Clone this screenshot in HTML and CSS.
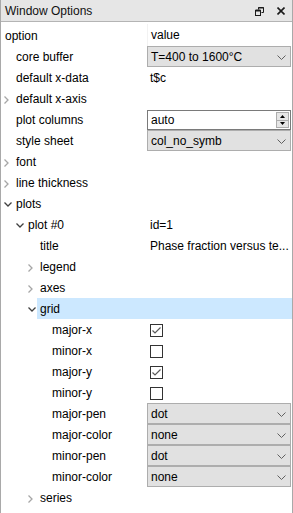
FILE: index.html
```html
<!DOCTYPE html>
<html>
<head>
<meta charset="utf-8">
<link rel="stylesheet" href="styles.css">
</head>
<body>
<div class="win">
  <div class="titlebar">
    <span class="ttl">Window Options</span>
    <div class="tbtns">
      <svg class="ico-float" width="9" height="9" viewBox="0 0 9 9"><path d="M3.5 0.5h5v5h-2" fill="none" stroke="#1a1a1a" stroke-width="1"/><path d="M3.5 0.5v2" fill="none" stroke="#1a1a1a" stroke-width="1"/><rect x="0.5" y="3.5" width="5" height="5" fill="none" stroke="#1a1a1a" stroke-width="1"/><path d="M0.5 3.5h5" stroke="#1a1a1a" stroke-width="2"/><path d="M3.5 0.5h5" stroke="#1a1a1a" stroke-width="2"/></svg>
      <svg class="ico-close" width="8" height="8" viewBox="0 0 8 8"><path d="M0.5 0.5L7.5 7.5M7.5 0.5L0.5 7.5" stroke="#1a1a1a" stroke-width="1.6"/></svg>
    </div>
  </div>
  <div class="tree">
    <div class="hdr"><div class="c1">option</div><div class="c2 hv">value</div></div>

    <div class="row"><div class="c1 l0"><span class="arr"></span>core buffer</div><div class="c2"><div class="combo"><span>T=400 to 1600°C</span><svg class="chev" width="9" height="5" viewBox="0 0 9 5"><path d="M0.5 0.5L4.5 4.5L8.5 0.5" fill="none" stroke="#606060"/></svg></div></div></div>
    <div class="row"><div class="c1 l0"><span class="arr"></span>default x-data</div><div class="c2 txt">t$c</div></div>
    <div class="row"><div class="c1 l0"><span class="arr"><svg width="5" height="8" viewBox="0 0 5 8"><path d="M0.5 0.5L4 4L0.5 7.5" fill="none" stroke="#a6a6a6" stroke-width="1.3"/></svg></span>default x-axis</div><div class="c2"></div></div>
    <div class="row"><div class="c1 l0"><span class="arr"></span>plot columns</div><div class="c2"><div class="spin"><span>auto</span><div class="spbtn"><div class="sb"><svg width="5" height="3" viewBox="0 0 5 3"><path d="M0 3L2.5 0L5 3Z" fill="#000"/></svg></div><div class="sb"><svg width="5" height="3" viewBox="0 0 5 3"><path d="M0 0L2.5 3L5 0Z" fill="#000"/></svg></div></div></div></div></div>
    <div class="row"><div class="c1 l0"><span class="arr"></span>style sheet</div><div class="c2"><div class="combo"><span>col_no_symb</span><svg class="chev" width="9" height="5" viewBox="0 0 9 5"><path d="M0.5 0.5L4.5 4.5L8.5 0.5" fill="none" stroke="#606060"/></svg></div></div></div>
    <div class="row"><div class="c1 l0"><span class="arr"><svg width="5" height="8" viewBox="0 0 5 8"><path d="M0.5 0.5L4 4L0.5 7.5" fill="none" stroke="#a6a6a6" stroke-width="1.3"/></svg></span>font</div><div class="c2"></div></div>
    <div class="row"><div class="c1 l0"><span class="arr"><svg width="5" height="8" viewBox="0 0 5 8"><path d="M0.5 0.5L4 4L0.5 7.5" fill="none" stroke="#a6a6a6" stroke-width="1.3"/></svg></span>line thickness</div><div class="c2"></div></div>
    <div class="row"><div class="c1 l0"><span class="arr"><svg width="8" height="5" viewBox="0 0 8 5"><path d="M0.5 0.5L4 4L7.5 0.5" fill="none" stroke="#404040" stroke-width="1.3"/></svg></span>plots</div><div class="c2"></div></div>
    <div class="row"><div class="c1 l1"><span class="arr"><svg width="8" height="5" viewBox="0 0 8 5"><path d="M0.5 0.5L4 4L7.5 0.5" fill="none" stroke="#404040" stroke-width="1.3"/></svg></span>plot #0</div><div class="c2 txt">id=1</div></div>
    <div class="row"><div class="c1 l2"><span class="arr"></span>title</div><div class="c2 txt">Phase fraction versus te...</div></div>
    <div class="row"><div class="c1 l2"><span class="arr"><svg width="5" height="8" viewBox="0 0 5 8"><path d="M0.5 0.5L4 4L0.5 7.5" fill="none" stroke="#a6a6a6" stroke-width="1.3"/></svg></span>legend</div><div class="c2"></div></div>
    <div class="row"><div class="c1 l2"><span class="arr"><svg width="5" height="8" viewBox="0 0 5 8"><path d="M0.5 0.5L4 4L0.5 7.5" fill="none" stroke="#a6a6a6" stroke-width="1.3"/></svg></span>axes</div><div class="c2"></div></div>
    <div class="row sel"><div class="c1 l2"><span class="arr"><svg width="8" height="5" viewBox="0 0 8 5"><path d="M0.5 0.5L4 4L7.5 0.5" fill="none" stroke="#404040" stroke-width="1.3"/></svg></span>grid</div><div class="c2"></div></div>
    <div class="row"><div class="c1 l3"><span class="arr"></span>major-x</div><div class="c2 txt"><span class="cb"><svg width="11" height="11" viewBox="0 0 11 11"><path d="M1.5 5.5L4 8L9.5 2.5" fill="none" stroke="#5a5a5a" stroke-width="1.2"/></svg></span></div></div>
    <div class="row"><div class="c1 l3"><span class="arr"></span>minor-x</div><div class="c2 txt"><span class="cb"></span></div></div>
    <div class="row"><div class="c1 l3"><span class="arr"></span>major-y</div><div class="c2 txt"><span class="cb"><svg width="11" height="11" viewBox="0 0 11 11"><path d="M1.5 5.5L4 8L9.5 2.5" fill="none" stroke="#5a5a5a" stroke-width="1.2"/></svg></span></div></div>
    <div class="row"><div class="c1 l3"><span class="arr"></span>minor-y</div><div class="c2 txt"><span class="cb"></span></div></div>
    <div class="row"><div class="c1 l3"><span class="arr"></span>major-pen</div><div class="c2"><div class="combo"><span>dot</span><svg class="chev" width="9" height="5" viewBox="0 0 9 5"><path d="M0.5 0.5L4.5 4.5L8.5 0.5" fill="none" stroke="#606060"/></svg></div></div></div>
    <div class="row"><div class="c1 l3"><span class="arr"></span>major-color</div><div class="c2"><div class="combo"><span>none</span><svg class="chev" width="9" height="5" viewBox="0 0 9 5"><path d="M0.5 0.5L4.5 4.5L8.5 0.5" fill="none" stroke="#606060"/></svg></div></div></div>
    <div class="row"><div class="c1 l3"><span class="arr"></span>minor-pen</div><div class="c2"><div class="combo"><span>dot</span><svg class="chev" width="9" height="5" viewBox="0 0 9 5"><path d="M0.5 0.5L4.5 4.5L8.5 0.5" fill="none" stroke="#606060"/></svg></div></div></div>
    <div class="row"><div class="c1 l3"><span class="arr"></span>minor-color</div><div class="c2"><div class="combo"><span>none</span><svg class="chev" width="9" height="5" viewBox="0 0 9 5"><path d="M0.5 0.5L4.5 4.5L8.5 0.5" fill="none" stroke="#606060"/></svg></div></div></div>
    <div class="row"><div class="c1 l2"><span class="arr"><svg width="5" height="8" viewBox="0 0 5 8"><path d="M0.5 0.5L4 4L0.5 7.5" fill="none" stroke="#a6a6a6" stroke-width="1.3"/></svg></span>series</div><div class="c2"></div></div>
  </div>
</div>
</body>
</html>
```

FILE: styles.css
```css
* { box-sizing: border-box; }
html, body { margin: 0; padding: 0; background: #ffffff; }
body {
  font-family: "Liberation Sans", Arial, sans-serif;
  font-size: 12px;
  color: #000;
}
.win {
  width: 293px;
  height: 513px;
  border-left: 1px solid #a9a9a9;
  border-right: 1px solid #a9a9a9;
  background: #fff;
  overflow: hidden;
}
.titlebar {
  height: 22px;
  background: #e6e6e6;
  border-bottom: 1px solid #b4b4b4;
  display: flex;
  align-items: center;
  justify-content: space-between;
  padding: 1px 7px 0 4px;
}
.ttl { line-height: 21px; color: #111; }
.tbtns { display: flex; align-items: center; gap: 13px; padding-left: 2px; }
.tree { padding-top: 0; }
.hdr {
  display: grid;
  grid-template-columns: 146px 1fr;
  height: 24px;
  line-height: 22px;
  padding-top: 2px;
}
.hdr .c1 { padding-left: 4px; }
.hdr .hv { padding-left: 3px; border-left: 1px solid #f2f2f2; }
.row {
  display: grid;
  grid-template-columns: 146px 1fr;
  height: 21px;
  line-height: 21px;
}
.row.sel { background: linear-gradient(to right, transparent 36px, #cce8ff 36px); }
.c1 { display: flex; align-items: center; white-space: nowrap; padding-top: 1px; }
.arr { width: 15px; flex: none; display: flex; align-items: center; justify-content: flex-start; padding-left: 3px; }
.l1 { padding-left: 12px; }
.l2 { padding-left: 24px; }
.l3 { padding-left: 36px; }
.c2 { padding-right: 1px; white-space: nowrap; overflow: hidden; }
.c2.txt { padding-left: 3px; padding-top: 1px; display: flex; align-items: center; }
.combo {
  height: 21px;
  background: #e1e1e1;
  border: 1px solid #adadad;
  display: flex;
  align-items: center;
  justify-content: space-between;
  padding: 1px 4px 0 3px;
  line-height: 19px;
}
.chev { flex: none; }
.spin {
  height: 20px;
  margin-top: 1px;
  background: #fff;
  border: 1px solid #7a7a7a;
  display: flex;
  align-items: center;
  justify-content: space-between;
  padding: 0 1px 0 3px;
  line-height: 18px;
}
.spbtn {
  width: 13px;
  height: 16px;
  border: 1px solid #adadad;
  background: #e6e6e6;
  display: flex;
  flex-direction: column;
}
.sb { flex: 1; display: flex; align-items: center; justify-content: center; }
.sb + .sb { border-top: 1px solid #adadad; }
.cb {
  width: 13px;
  height: 13px;
  border: 1px solid #333;
  background: #fff;
  display: flex;
  align-items: center;
  justify-content: center;
}
```
